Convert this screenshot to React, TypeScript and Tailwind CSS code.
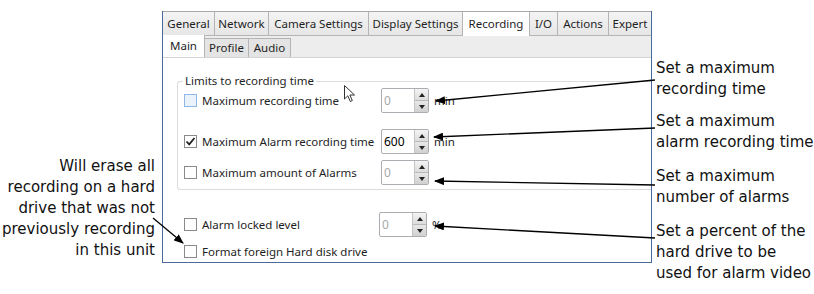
import React from "react";

const ui = { fontFamily: '"Noto Sans", "Open Sans", sans-serif' };
const note = { fontFamily: '"DejaVu Sans", Verdana, sans-serif' };

type CheckProps = { checked?: boolean; hover?: boolean };

const Check: React.FC<CheckProps> = ({ checked, hover }) => (
  <span
    className={
      "relative inline-block w-[13px] h-[13px] border shrink-0 " +
      (hover ? "border-[#8fb8e6] bg-[#eaf2fb]" : "border-[#8a8a8a] bg-white")
    }
  >
    {checked && (
      <svg viewBox="0 0 13 13" className="absolute left-[-1px] top-[-1px] w-[13px] h-[13px]">
        <path d="M2.5 6.5 L5.2 9.3 L10.5 3" fill="none" stroke="#222" strokeWidth="1.8" />
      </svg>
    )}
  </span>
);

type SpinProps = { value: string; enabled?: boolean };

const Spinner: React.FC<SpinProps> = ({ value, enabled }) => (
  <div className="flex w-[48px] h-[25px] border border-[#abadb3] rounded-[2px] bg-white overflow-hidden">
    <div
      className={
        "flex-1 flex items-center pl-[2px] text-[12px] " +
        (enabled ? "text-black" : "text-[#a8a8a8]")
      }
    >
      {value}
    </div>
    <div className="w-[14px] flex flex-col border-l border-[#c4c4c4]">
      <div className="flex-1 flex items-center justify-center bg-gradient-to-b from-[#f4f4f4] to-[#dcdcdc] border-b border-[#b8b8b8]">
        <svg width="6" height="4" viewBox="0 0 6 4">
          <path d="M0 4 L3 0 L6 4 Z" fill="#222" />
        </svg>
      </div>
      <div className="flex-1 flex items-center justify-center bg-gradient-to-b from-[#e8e8e8] to-[#d0d0d0]">
        <svg width="6" height="4" viewBox="0 0 6 4">
          <path d="M0 0 L6 0 L3 4 Z" fill="#222" />
        </svg>
      </div>
    </div>
  </div>
);

const tabs = [
  { label: "General", w: "w-[52px]" },
  { label: "Network", w: "w-[54px]" },
  { label: "Camera Settings", w: "w-[100px]" },
  { label: "Display Settings", w: "w-[94px]" },
  { label: "Recording", w: "w-[67px]", active: true },
  { label: "I/O", w: "w-[28px]" },
  { label: "Actions", w: "w-[51px]" },
  { label: "Expert", w: "flex-1" },
];

const subTabs = [
  { label: "Main", w: "w-[42px]", active: true },
  { label: "Profile", w: "w-[44px]" },
  { label: "Audio", w: "w-[42px]" },
];

function Row({
  label,
  checked,
  hover,
  labelW,
  value,
  enabled,
  unit,
}: {
  label: string;
  checked?: boolean;
  hover?: boolean;
  labelW: string;
  value: string;
  enabled?: boolean;
  unit?: string;
}) {
  return (
    <div className="flex items-center h-[25px]">
      <div className={"flex items-center gap-[5px] whitespace-nowrap " + labelW}>
        <Check checked={checked} hover={hover} />
        <span className="text-[11.5px] text-[#1e1e1e]">{label}</span>
      </div>
      <Spinner value={value} enabled={enabled} />
      {unit && <span className="ml-[5px] text-[11.5px] text-[#1e1e1e]">{unit}</span>}
    </div>
  );
}

export default function App() {
  return (
    <div className="relative w-[814px] h-[294px] bg-white overflow-hidden flex">
      {/* left note */}
      <div className="w-[162px] pt-[156px] pr-[7px] text-right text-[15px] leading-[21px] text-[#111]" style={note}>
        Will erase all
        <br />
        recording on a hard
        <br />
        drive that was not
        <br />
        previously recording
        <br />
        in this unit
      </div>

      {/* settings panel */}
      <div className="mt-[11px] w-[490px] h-[252px] border-l border-r border-b border-[#4a6a9c] flex flex-col" style={ui}>
        <div className="flex h-[25px] border-t border-[#a9a9a9] bg-[#f0f0f0]">
          {tabs.map((t) => (
            <div
              key={t.label}
              className={
                "flex items-center justify-center text-[11.5px] text-[#1e1e1e] whitespace-nowrap border-r border-[#b4b4b4] last:border-r-0 " +
                t.w +
                (t.active ? " bg-white" : " bg-gradient-to-b from-[#f4f4f4] to-[#e6e6e6] border-b border-b-[#b4b4b4]")
              }
            >
              {t.label}
            </div>
          ))}
        </div>
        <div className="flex h-[22px] bg-[#ededed] border-b border-[#d4d4d4] items-end">
          {subTabs.map((t) => (
            <div
              key={t.label}
              className={
                "flex items-center justify-center text-[11.5px] text-[#1e1e1e] border-r border-[#b4b4b4] " +
                t.w +
                (t.active ? " h-[22px] bg-white" : " h-[19px] bg-[#e4e4e4] border-t border-t-[#b4b4b4]")
              }
            >
              {t.label}
            </div>
          ))}
        </div>

        <div className="flex-1 bg-white pl-[14px] pt-[23px]">
          <div className="relative h-[109px] border border-r-0 border-[#dcdcdc] rounded-l-[3px] pl-[6px] pt-[6px]">
            <span className="absolute left-[5px] top-[-10px] px-[2px] bg-white text-[11.5px] text-[#1e1e1e]">
              Limits to recording time
            </span>
            <Row label="Maximum recording time" hover labelW="w-[197px]" value="0" unit="min" />
            <div className="mt-[16px]">
              <Row label="Maximum Alarm recording time" checked labelW="w-[197px]" value="600" enabled unit="min" />
            </div>
            <div className="mt-[6px]">
              <Row label="Maximum amount of Alarms" labelW="w-[197px]" value="0" />
            </div>
          </div>
          <div className="pl-[7px] mt-[22px]">
            <Row label="Alarm locked level" labelW="w-[195px]" value="0" unit="%" />
            <div className="flex items-center gap-[5px] mt-[6px]">
              <Check />
              <span className="text-[11.5px] text-[#1e1e1e]">Format foreign Hard disk drive</span>
            </div>
          </div>
        </div>
      </div>

      {/* right notes */}
      <div className="flex-1 pl-[4px] pt-[58px] flex flex-col text-[15px] leading-[21px] text-[#111]" style={note}>
        <div>
          Set a maximum
          <br />
          recording time
        </div>
        <div className="mt-[11px]">
          Set a maximum
          <br />
          alarm recording time
        </div>
        <div className="mt-[13px]">
          Set a maximum
          <br />
          number of alarms
        </div>
        <div className="mt-[13px] whitespace-nowrap">
          Set a percent of the
          <br />
          hard drive to be
          <br />
          used for alarm video
        </div>
      </div>

      {/* mouse cursor */}
      <svg className="absolute left-[344px] top-[85px]" width="12" height="18" viewBox="0 0 12 18">
        <path d="M0.5 0.5 L0.5 14 L3.8 10.8 L6.3 16.5 L8.3 15.6 L5.9 10 L10.5 10 Z" fill="white" stroke="#333" strokeWidth="1" />
      </svg>

      {/* arrows */}
      <svg className="absolute inset-0 pointer-events-none" width="814" height="294" viewBox="0 0 814 294">
        <defs>
          <marker id="ah" markerWidth="10" markerHeight="8" refX="9" refY="4" orient="auto" markerUnits="userSpaceOnUse">
            <path d="M0 0 L10 4 L0 8 Z" fill="#000" />
          </marker>
        </defs>
        <g stroke="#000" strokeWidth="1.3" markerEnd="url(#ah)">
          <line x1="655" y1="80" x2="436" y2="101" />
          <line x1="655" y1="128" x2="434" y2="137" />
          <line x1="655" y1="185" x2="435" y2="181" />
          <line x1="655" y1="238" x2="435" y2="226" />
          <line x1="153" y1="218" x2="183" y2="243" />
        </g>
      </svg>
    </div>
  );
}
